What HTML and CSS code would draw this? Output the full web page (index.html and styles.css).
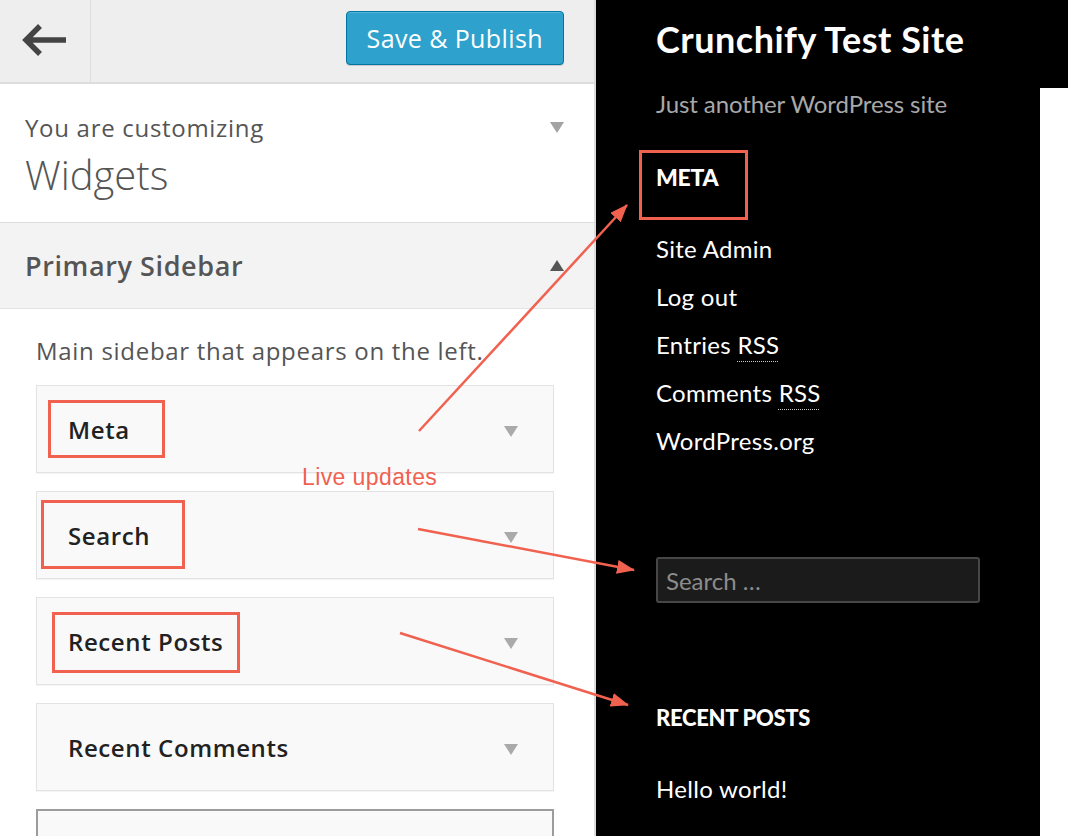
FILE: index.html
```html
<!DOCTYPE html>
<html lang="en">
<head>
  <meta charset="UTF-8" />
  <meta name="viewport" content="width=device-width, initial-scale=1.0" />
  <title>Customize: Widgets</title>
  <link rel="stylesheet" href="styles.css">
</head>
<body>
  <div class="page">
    <aside class="customizer">
      <header class="cz-header">
        <a class="back" href="#">
          <svg width="50" height="40" viewBox="0 0 50 40">
            <path d="M48 19 H10 M22 5 L8 19 L22 33" fill="none" stroke="#444" stroke-width="5.5" stroke-linejoin="miter" />
          </svg>
        </a>
        <div class="cz-actions">
          <button class="btn-publish">Save &amp; Publish</button>
        </div>
      </header>

      <section class="cz-info">
        <div>
          <span class="cz-label">You are customizing</span>
          <span class="cz-title">Widgets</span>
        </div>
        <span class="caret caret-down caret-light"></span>
      </section>

      <section class="cz-section">
        <h3 class="cz-section-title">Primary Sidebar <span class="caret caret-up"></span></h3>
        <div class="cz-section-body">
          <p class="cz-desc">Main sidebar that appears on the left.</p>
          <div class="widget"><span class="widget-title">Meta</span><span class="caret caret-down"></span></div>
          <div class="widget"><span class="widget-title">Search</span><span class="caret caret-down"></span></div>
          <div class="widget"><span class="widget-title">Recent Posts</span><span class="caret caret-down"></span></div>
          <div class="widget"><span class="widget-title">Recent Comments</span><span class="caret caret-down"></span></div>
          <div class="widget widget-open"></div>
        </div>
      </section>
    </aside>

    <main class="preview">
      <div class="site-sidebar">
        <h1 class="site-title">Crunchify Test Site</h1>
        <p class="site-tagline">Just another WordPress site</p>

        <h2 class="wg-title wg-meta">Meta</h2>
        <ul class="wg-links">
          <li><a href="#">Site Admin</a></li>
          <li><a href="#">Log out</a></li>
          <li><a href="#">Entries <abbr>RSS</abbr></a></li>
          <li><a href="#">Comments <abbr>RSS</abbr></a></li>
          <li><a href="#">WordPress.org</a></li>
        </ul>

        <input class="search-field" type="search" placeholder="Search …" />

        <h2 class="wg-title wg-recent">Recent Posts</h2>
        <ul class="wg-links wg-posts">
          <li><a href="#">Hello world!</a></li>
        </ul>
      </div>
      <div class="site-content"></div>
    </main>

    <!-- annotations drawn on top of the screenshot -->
    <svg class="annotations" width="1068" height="836" viewBox="0 0 1068 836">
      <defs>
        <marker id="head" viewBox="0 0 18 14" refX="17" refY="7" markerWidth="18" markerHeight="14" markerUnits="userSpaceOnUse" orient="auto">
          <path d="M0 0 L18 7 L0 14 Z" fill="#f06150" />
        </marker>
      </defs>
      <g fill="none" stroke="#f06150" stroke-width="3">
        <rect x="49.5" y="401.5" width="114" height="55" />
        <rect x="42.5" y="501.5" width="141" height="66" />
        <rect x="53.5" y="613.5" width="185" height="58" />
        <rect x="640.5" y="151.5" width="106" height="67" />
      </g>
      <g stroke="#f06150" stroke-width="2.5" marker-end="url(#head)">
        <line x1="419" y1="431" x2="627" y2="205" />
        <line x1="418" y1="529" x2="634" y2="570" />
        <line x1="400" y1="633" x2="628" y2="705" />
      </g>
    </svg>
    <div class="note">Live updates</div>
  </div>
</body>
</html>
```

FILE: styles.css
```css
* {
  box-sizing: border-box;
}
body {
  margin: 0;
  font-family: "Open Sans", "Liberation Sans", sans-serif;
  background: #000;
}
.page {
  position: relative;
  display: flex;
  width: 1068px;
  height: 836px;
  overflow: hidden;
}

/* customizer panel */
.customizer {
  width: 596px;
  flex-shrink: 0;
  background: #fff;
  border-right: 2px solid #dcdcdc;
}
.cz-header {
  display: flex;
  height: 84px;
  background: #eee;
  border-bottom: 2px solid #ddd;
}
.back {
  display: flex;
  align-items: center;
  justify-content: center;
  width: 91px;
  border-right: 1px solid #ddd;
  padding-right: 4px;
}
.cz-actions {
  flex: 1;
  display: flex;
  justify-content: flex-end;
  align-items: flex-start;
  padding: 11px 30px 0 0;
}
.btn-publish {
  height: 54px;
  padding: 0 20px;
  font-family: "Open Sans", sans-serif;
  font-size: 25px;
  color: #fff;
  background: #2ea2cc;
  border: 1px solid #0074a2;
  border-radius: 4px;
  box-shadow: inset 0 1px 0 rgba(120, 200, 230, 0.5), 0 1px 0 rgba(0, 0, 0, 0.15);
  letter-spacing: 0.4px;
}
.cz-info {
  display: flex;
  justify-content: space-between;
  padding: 29px 30px 23px 25px;
  border-bottom: 1px solid #ddd;
  color: #555;
}
.cz-label {
  display: block;
  font-size: 24px;
  line-height: 30px;
  letter-spacing: 0.7px;
}
.cz-title {
  display: block;
  margin-top: 8px;
  font-size: 40px;
  font-weight: 300;
  line-height: 48px;
}
.caret {
  width: 0;
  height: 0;
  border-left: 7.5px solid transparent;
  border-right: 7.5px solid transparent;
}
.caret-down {
  border-top: 11px solid #aaa;
}
.caret-light {
  margin-top: 9px;
  border-top-color: #a3a3a3;
}
.caret-up {
  border-bottom: 11px solid #555;
}
.cz-section-title {
  display: flex;
  justify-content: space-between;
  align-items: center;
  height: 86px;
  margin: 0;
  padding: 0 30px 0 25px;
  font-size: 27px;
  font-weight: 600;
  letter-spacing: 0.6px;
  color: #555;
  background: #f3f3f3;
  border-bottom: 1px solid #e4e4e4;
}
.cz-section-body {
  padding: 27px 40px 0 36px;
}
.cz-desc {
  margin: 0 0 19px;
  font-size: 24px;
  line-height: 30px;
  letter-spacing: 0.7px;
  color: #555;
}
.widget {
  display: flex;
  justify-content: space-between;
  align-items: center;
  height: 88px;
  margin-bottom: 18px;
  padding: 0 35px 0 31px;
  background: #f9f9f9;
  border: 1px solid #e3e3e3;
  box-shadow: 0 1px 1px rgba(0, 0, 0, 0.04);
}
.widget .caret {
  margin-top: 4px;
}
.widget-title {
  font-size: 24px;
  font-weight: 600;
  letter-spacing: 0.6px;
  color: #222;
}
.widget-open {
  border: 2px solid #9c9c9c;
}

/* site preview */
.preview {
  flex: 1;
  display: flex;
  background: #000;
  font-family: Lato, "Liberation Sans", sans-serif;
  color: #fff;
}
.site-sidebar {
  width: 444px;
  padding: 18px 0 0 60px;
}
.site-content {
  flex: 1;
  background: #fff;
  border-top: 88px solid #000;
}
.site-title {
  margin: 0;
  font-size: 36px;
  font-weight: 700;
  line-height: 42px;
  letter-spacing: 0.5px;
}
.site-tagline {
  margin: 30px 0 0;
  font-size: 24px;
  line-height: 28px;
  color: #a8a8a8;
  letter-spacing: -0.1px;
}
.wg-title {
  margin: 0;
  font-size: 23px;
  font-weight: 900;
  line-height: 28px;
  text-transform: uppercase;
  letter-spacing: -0.3px;
}
.wg-meta {
  margin-top: 45px;
}
.wg-links {
  list-style: none;
  margin: 34px 0 0;
  padding: 0;
}
.wg-links li {
  font-size: 24px;
  line-height: 48px;
  letter-spacing: 0.3px;
}
.wg-links a {
  color: #fff;
  text-decoration: none;
}
.wg-links abbr {
  text-decoration: underline dotted #ccc;
  text-decoration-thickness: 1px;
  text-underline-offset: 7px;
}
.search-field {
  display: block;
  width: 324px;
  height: 46px;
  margin-top: 92px;
  padding: 0 8px;
  font-family: Lato, sans-serif;
  font-size: 24px;
  color: #fff;
  background: #1b1b1b;
  border: 2px solid #474747;
  border-radius: 3px;
}
.search-field::placeholder {
  color: #8c8c8c;
}
.wg-recent {
  margin-top: 101px;
  font-size: 22px;
}
.wg-posts {
  margin-top: 33px;
}

/* annotations */
.annotations {
  position: absolute;
  top: 0;
  left: 0;
  pointer-events: none;
}
.note {
  position: absolute;
  left: 302px;
  top: 464px;
  font-family: "Liberation Sans", Arial, sans-serif;
  font-size: 23px;
  line-height: 26px;
  letter-spacing: 0.4px;
  color: #f06150;
}
```
